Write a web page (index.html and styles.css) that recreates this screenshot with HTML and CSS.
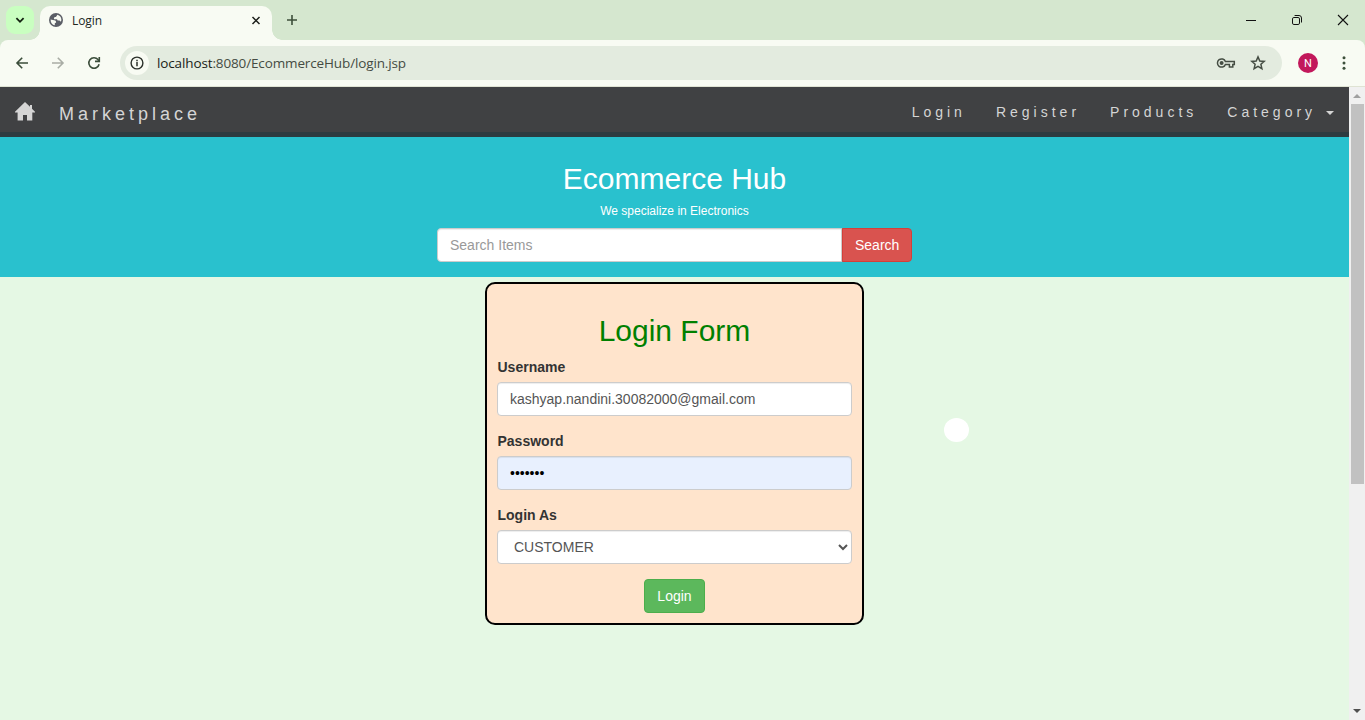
FILE: index.html
```html
<!DOCTYPE html>
<html lang="en">
<head>
<meta charset="utf-8">
<title>Login</title>
<link rel="stylesheet" href="styles.css">
</head>
<body>
<div class="browser">
  <div class="tabstrip">
    <div class="tab-search"><svg width="28" height="28" viewBox="0 0 28 28"><path d="M10.400 12.200 14 15.800l3.600-3.600" fill="none" stroke="#12210f" stroke-width="1.800"/></svg></div>
    <div class="tab">
      <svg class="favicon" width="14" height="14" viewBox="0 0 14 14"><circle cx="7" cy="7" r="7" fill="#5b5e66"/><path d="M1.600 6.500 5.200 7.200c1.700.4 1.900 1.200 1.900 2.200l-1.300.8v2.100C3.300 11.800 1.500 9.700 1.600 6.500zM8.400 1.700c2.300.6 4 2.600 4 5.200l-.5 1.800c-.7-.8-1.300-1.200-2.400-1.200-.9 0-1.400-.5-1.400-1.300H5.600c-.6 0-.8-.5-.6-1l.6-1.200c.6 0 1.500.1 1.700-.5z" fill="#f8fbf3"/></svg>
      <span class="tab-title">Login</span>
      <svg class="tab-close" width="10" height="10" viewBox="0 0 10 10"><path d="M1.500 1l7 7M8.500 1l-7 7" stroke="#1b1f1a" stroke-width="1.500"/></svg>
    </div>
    <svg class="new-tab" width="12" height="12" viewBox="0 0 12 12"><path d="M6 1v10M1 6h10" stroke="#3c4f3a" stroke-width="1.600"/></svg>
    <div class="window-controls">
      <svg width="12" height="12" viewBox="0 0 12 12"><path d="M1 6.500h10" stroke="#111"/></svg>
      <svg width="12" height="12" viewBox="0 0 12 12"><g fill="none" stroke="#111"><rect x="1.500" y="3.500" width="7" height="7" rx="1.400"/><path d="M3.600 1.500h4.400a2.500 2.500 0 0 1 2.500 2.500v4.500"/></g></svg>
      <svg width="12" height="12" viewBox="0 0 12 12"><path d="M1 1l10 10M11 1 1 11" stroke="#111" stroke-width="1.100"/></svg>
    </div>
  </div>
  <div class="toolbar">
    <svg class="nav-icon" width="16" height="16" viewBox="0 0 16 16"><path d="M14 8H3M8.200 2.800 3 8l5.200 5.200" fill="none" stroke="#3b4d3a" stroke-width="1.600"/></svg>
    <svg class="nav-icon" width="16" height="16" viewBox="0 0 16 16"><path d="M2 8h11M7.800 2.800 13 8l-5.200 5.200" fill="none" stroke="#a9ada5" stroke-width="1.600"/></svg>
    <svg class="nav-icon" width="16" height="16" viewBox="0 0 16 16"><path d="M13.100 9.200A5.200 5.200 0 1 1 12 4.600L13 5.700" fill="none" stroke="#3b4d3a" stroke-width="1.600"/><path d="M13.300 2v4.400H9" fill="none" stroke="#3b4d3a" stroke-width="1.600"/></svg>
    <div class="omnibox">
      <span class="site-info"><svg width="14" height="14" viewBox="0 0 14 14"><circle cx="7" cy="7" r="5.900" fill="none" stroke="#2b302a" stroke-width="1.400"/><path d="M7 6v4.200M7 3.700v1.500" stroke="#2b302a" stroke-width="1.500"/></svg></span>
      <span class="url"><b>localhost</b>:8080/EcommerceHub/login.jsp</span>
      <svg class="key" width="20" height="12" viewBox="0 0 20 12"><path d="M9.400 4.600A4.100 4.100 0 1 0 9.400 7.400h4v2.500h3.400V7.400h1.500V4.600z" fill="none" stroke="#454d43" stroke-width="1.500"/><circle cx="5.600" cy="6" r="2" fill="#454d43"/></svg>
      <svg class="star" width="16" height="16" viewBox="0 0 16 16"><path d="M8 1.900 9.800 6l4.400.4-3.300 2.900 1 4.400L8 11.400l-3.900 2.300 1-4.400L1.800 6.400 6.200 6z" fill="none" stroke="#454d43" stroke-width="1.500"/></svg>
    </div>
    <span class="avatar">N</span>
    <svg class="kebab" width="6" height="16" viewBox="0 0 6 16"><g fill="#3c4f3a"><circle cx="3" cy="2.700" r="1.500"/><circle cx="3" cy="8" r="1.500"/><circle cx="3" cy="13.300" r="1.500"/></g></svg>
  </div>
  <div class="viewport">
    <main class="page">
      <nav class="navbar">
        <svg class="home" width="20" height="19" viewBox="0 0 20 19"><path d="M10 0 0 9.800v.7h2.600V18.500H8V13h4v5.500h5.300v-8H20v-.7l-3-3V3h-2v1.800z" fill="#d5d5d5"/></svg>
        <span class="brand">Marketplace</span>
        <ul class="menu"><li>Login</li><li>Register</li><li>Products</li><li>Category <i class="caret"></i></li></ul>
      </nav>
      <header class="hero">
        <h1>Ecommerce Hub</h1>
        <p>We specialize in Electronics</p>
        <form class="search"><input class="control" type="text" placeholder="Search Items"><button class="btn danger" type="button">Search</button></form>
      </header>
      <form class="login">
        <h2>Login Form</h2>
        <label for="user">Username</label>
        <input class="control" id="user" type="text" value="kashyap.nandini.30082000@gmail.com">
        <label for="pass">Password</label>
        <input class="control filled" id="pass" type="password" value="1234567">
        <label for="role">Login As</label>
        <select class="control" id="role"><option>CUSTOMER</option></select>
        <button class="btn success" type="button">Login</button>
      </form>
      <span class="pointer"></span>
    </main>
    <div class="scrollbar"><i class="arrow up"></i><i class="thumb"></i><i class="arrow down"></i></div>
  </div>
</div>
</body>
</html>
```
FILE: styles.css
```css
* { box-sizing: border-box; }
body { margin: 0; font-family: "Liberation Sans", Arial, sans-serif; font-size: 14px; line-height: 20px; color: #333; }
svg { display: block; flex: none; }
.browser { display: flex; flex-direction: column; height: 720px; overflow: hidden; background: #d5e7cf; }

.tabstrip { display: flex; height: 40px; align-items: flex-start; }
.tab-search { width: 28px; height: 28px; margin: 6px 6px 0; border-radius: 9px; background: #c9ffc0; }
.tab { position: relative; display: flex; align-items: center; width: 232px; height: 34px; margin-top: 6px; padding: 0 11px 5px 9px; border-radius: 10px 10px 0 0; background: #f8fbf3; }
.tab::before, .tab::after { content: ""; position: absolute; bottom: 0; width: 10px; height: 10px; }
.tab::before { left: -10px; background: radial-gradient(circle at 0 0, transparent 9.500px, #f8fbf3 10px); }
.tab::after { right: -10px; background: radial-gradient(circle at 100% 0, transparent 9.500px, #f8fbf3 10px); }
.favicon { margin-top: -1px; }
.tab-title { margin-left: 9px; flex: 1; font: 12px/16px "Open Sans", "Noto Sans", sans-serif; letter-spacing: -.1px; color: #22271f; }
.new-tab { margin: 14px 0 0 14px; }
.window-controls { display: flex; gap: 34px; margin: 14px 16px 0 auto; }

.toolbar { display: flex; align-items: center; height: 47px; padding: 0 18px 0 14px; border-radius: 8px 8px 0 0; border-bottom: 1px solid #dfe3d3; background: #f8fbf3; }
.nav-icon { margin-right: 20px; }
.omnibox { display: flex; align-items: center; width: 1162px; height: 34px; margin-left: -2px; padding: 0 16px 0 5px; border-radius: 17px; background: #e3ebdf; }
.site-info { display: grid; place-items: center; width: 24px; height: 24px; border-radius: 50%; background: #f8fbf3; }
.url { flex: 1; margin-left: 8px; font: 13.500px/20px "Open Sans", "Noto Sans", sans-serif; letter-spacing: -.13px; color: #454b43; white-space: nowrap; }
.url b { font-weight: 400; color: #191d18; }
.key { margin-right: 14px; }
.avatar { width: 20px; height: 20px; margin-left: 16px; border-radius: 50%; background: #c2185b; color: #fff; font: 11px/21px Roboto, sans-serif; text-align: center; }
.kebab { margin-left: auto; }

.viewport { display: flex; flex: 1; min-height: 0; }
.page { position: relative; width: 1349px; background: #e5f8e4; }
.navbar { display: flex; align-items: center; height: 50px; padding: 0 15px; background: #404143; border-bottom: 5px solid #2d3b40; color: #d5d5d5; }
.home { margin-top: 4px; }
.brand { margin: 9px 0 0 24px; font-size: 18px; letter-spacing: 4px; }
.menu { display: flex; gap: 30px; margin: 5px 0 0 auto; padding: 0; list-style: none; letter-spacing: 4px; }
.menu li { white-space: nowrap; }
.caret { display: inline-block; margin-left: 2px; vertical-align: middle; border: 4px solid transparent; border-top-color: #d5d5d5; border-bottom: 0; }
.hero { height: 140px; padding-top: 25px; background: #29c1ce; color: #fff; text-align: center; }
h1, h2 { margin: 0; font-size: 30px; font-weight: 400; line-height: 33px; }
.hero p { margin: 7px 0 8px; font-size: 12px; line-height: 18px; }
.search { display: flex; width: 475px; margin: 0 auto; }
.control { display: block; width: 100%; height: 34px; padding: 6px 12px; border: 1px solid #ccc; border-radius: 4px; background: #fff; box-shadow: inset 0 1px 1px rgba(0,0,0,.075); color: #555; font: 14px/20px "Liberation Sans", Arial, sans-serif; }
.control::placeholder { color: #999; }
.control.filled { background: #e8f0fe; color: #000; }
.search .control { flex: 1; border-radius: 4px 0 0 4px; }
.btn { height: 34px; padding: 6px 12px; border: 1px solid; border-radius: 4px; color: #fff; font: 14px/20px "Liberation Sans", Arial, sans-serif; }
.danger { width: 70px; border-color: #d43f3a; border-radius: 0 4px 4px 0; background: #d9534f; }
.success { display: block; width: 61px; margin: 0 auto; border-color: #4cae4c; background: #5cb85c; }
.login { width: 379px; height: 343px; margin: 5px auto 0; padding: 30px 10px 0; border: 2px solid #000; border-radius: 10px; background: #ffe4cc; }
.login h2 { margin-bottom: 10px; color: green; text-align: center; }
.login label { display: block; margin-bottom: 5px; padding-left: .5px; font-weight: 700; }
.login .control { margin-bottom: 15px; }
.pointer { position: absolute; left: 944px; top: 331px; width: 25px; height: 24px; border-radius: 50%; background: #fff; }

.scrollbar { display: flex; flex-direction: column; align-items: center; width: 16px; padding: 7px 0 7px; background: #f0f0f0; }
.arrow { border: 4px solid transparent; }
.up { border-top: 0; border-bottom-color: #a0a0a0; }
.thumb { width: 13px; height: 380px; margin: 6px 0 auto 1px; background: #c1c1c1; }
.down { border-bottom: 0; border-top-color: #505050; }
```
